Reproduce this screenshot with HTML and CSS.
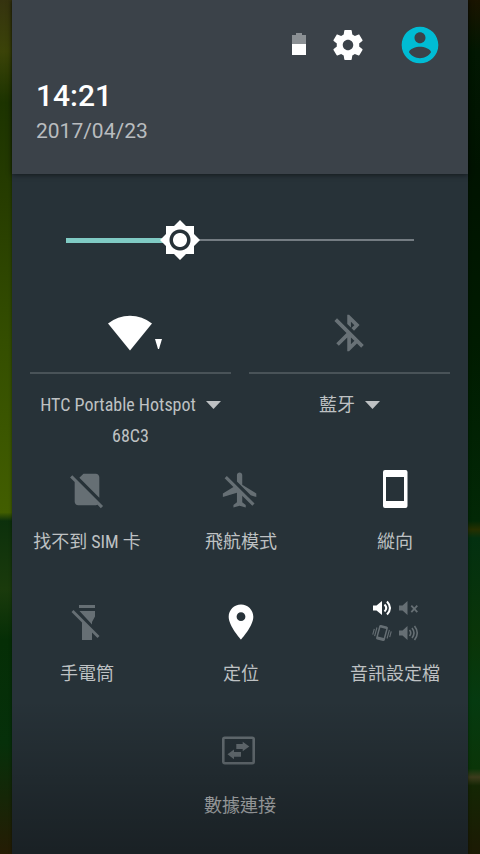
FILE: index.html
```html
<!DOCTYPE html>
<html lang="zh-Hant">
<head>
<meta charset="utf-8">
<meta name="viewport" content="width=device-width, initial-scale=1">
<title>14:21</title>
<link rel="stylesheet" href="styles.css">
</head>
<body>
<main class="panel">
  <header class="header">
    <div class="status">
      <svg class="battery" viewBox="0 0 14 24" aria-hidden="true"><path fill="#8b9094" d="M4 0h6v2h4v9H0V2h4z"/><path fill="#fff" d="M0 11h14v11H0z"/></svg>
      <button class="icon-button settings" aria-label="設定"><svg viewBox="0 0 24 24"><path d="M19.43 12.98c.04-.32.07-.64.07-.98s-.03-.66-.07-.98l2.11-1.65c.19-.15.24-.42.12-.64l-2-3.46c-.12-.22-.39-.3-.61-.22l-2.49 1c-.52-.4-1.08-.73-1.69-.98l-.38-2.65C14.46 2.18 14.25 2 14 2h-4c-.25 0-.46.18-.49.42l-.38 2.65c-.61.25-1.17.59-1.69.98l-2.49-1c-.23-.09-.49 0-.61.22l-2 3.46c-.13.22-.07.49.12.64l2.11 1.65c-.04.32-.07.65-.07.98s.03.66.07.98l-2.11 1.65c-.19.15-.24.42-.12.64l2 3.46c.12.22.39.3.61.22l2.49-1c.52.4 1.08.73 1.69.98l.38 2.65c.03.24.24.42.49.42h4c.25 0 .46-.18.49-.42l.38-2.65c.61-.25 1.17-.59 1.69-.98l2.49 1c.23.09.49 0 .61-.22l2-3.46c.12-.22.07-.49-.12-.64l-2.11-1.65zM12 15.5c-1.93 0-3.5-1.57-3.5-3.5s1.57-3.5 3.5-3.5 3.5 1.57 3.5 3.5-1.57 3.5-3.5 3.5z"/></svg></button>
      <button class="icon-button user" aria-label="使用者"><svg viewBox="0 0 24 24"><path d="M12 2C6.48 2 2 6.48 2 12s4.48 10 10 10 10-4.48 10-10S17.52 2 12 2zm0 3c1.66 0 3 1.34 3 3s-1.34 3-3 3-3-1.34-3-3 1.34-3 3-3zm0 14.2c-2.5 0-4.71-1.28-6-3.22.03-1.99 4-3.08 6-3.08 1.99 0 5.97 1.09 6 3.08-1.29 1.94-3.5 3.22-6 3.22z"/></svg></button>
    </div>
    <time class="clock">14:21</time>
    <time class="date">2017/04/23</time>
  </header>

  <input class="brightness" type="range" min="0" max="348" value="114" aria-label="亮度">

  <section class="wide-tiles">
    <div class="wide-tile">
      <button class="wide-icon on" aria-label="Wi-Fi"><svg viewBox="0 0 65 44"><path d="M32 39.500 10 12.500A35 35 0 0 1 54 12.500z"/><path d="M57 28h7l-3 10h-1z"/></svg></button>
      <button class="wide-label">HTC Portable Hotspot<svg class="caret" viewBox="0 0 15 8"><path d="M0 0h15L7.500 8z"/></svg><br>68C3</button>
    </div>
    <div class="wide-tile">
      <button class="wide-icon" aria-label="藍牙開關"><svg viewBox="-5.500 0 35.450 24"><path d="M13 5.830l1.880 1.880-1.600 1.600 1.410 1.410 3.020-3.020L12 2h-1v5.030l2 2v-3.200zM5.410 4L4 5.410 10.590 12 5 17.590 6.410 19 11 14.410V22h1l4.290-4.290 2.300 2.290L20 18.590 5.410 4zM13 18.170v-3.760l1.880 1.880L13 18.170z"/></svg></button>
      <button class="wide-label">藍牙<svg class="caret" viewBox="0 0 15 8"><path d="M0 0h15L7.500 8z"/></svg></button>
    </div>
  </section>

  <section class="tiles">
    <button class="tile">
      <svg viewBox="-.5 -.2 25 25"><path d="M18.990 5c0-1.100-.890-2-1.990-2h-7L7.660 5.340 19 16.680 18.990 5zM3.650 3.880L2.380 5.150 5 7.770V19c0 1.100.900 2 2 2h10.010c.350 0 .670-.100.960-.260l1.880 1.880 1.270-1.270L3.650 3.880z"/></svg>
      <span>找不到 SIM 卡</span>
    </button>
    <button class="tile">
      <svg viewBox="-.2 -.5 25 25"><path d="M13 9V3.500c0-.830-.670-1.500-1.500-1.500S10 2.670 10 3.500v3.680l7.830 7.830L21 16v-2l-8-5zM3 5.270l4.990 4.990L2 14v2l8-2.500V19l-2 1.500V22l3.500-1 3.500 1v-1.500L13 19v-3.730L18.730 21 20 19.730 4.270 4 3 5.270z"/></svg>
      <span>飛航模式</span>
    </button>
    <button class="tile on">
      <svg viewBox="0 0 44 44"><path fill-rule="evenodd" d="M12 2h20.500a2 2 0 0 1 2 2v34a2 2 0 0 1-2 2H12a2 2 0 0 1-2-2V4a2 2 0 0 1 2-2zM13 9v24h18V9z"/></svg>
      <span>縱向</span>
    </button>
    <button class="tile">
      <svg viewBox="0 0 44 44"><path d="M14 5h16v3H14zM14.500 11H30v5.500L27 22v2.500zM17 20l10 10v10H17zM6.500 12l2-2L34.500 36l-2 2z"/></svg>
      <span>手電筒</span>
    </button>
    <button class="tile on">
      <svg viewBox="-.5 -.5 25 25"><path d="M12 2C8.130 2 5 5.130 5 9c0 5.250 7 13 7 13s7-7.750 7-13c0-3.870-3.130-7-7-7zm0 9.500c-1.380 0-2.500-1.120-2.500-2.500s1.120-2.500 2.500-2.500 2.500 1.120 2.500 2.500-1.120 2.500-2.500 2.500z"/></svg>
      <span>定位</span>
    </button>
    <button class="tile">
      <svg class="profiles" viewBox="0 0 48 44">
        <g class="active"><path d="M2 5.500h3.500L11 1v14l-5.500-4.500H2z"/><path class="line" stroke-width="2" d="M13.500 4.500q3.500 3.500 0 7M16 1.500q6 6.500 0 13"/></g>
        <path d="M28 5.500h3.500L36.500 1v14l-5-4.500H28z"/><path class="line" stroke-width="1.800" d="M40.300 5.700l6 6.500M46.300 5.700l-6 6.500"/>
        <g transform="rotate(15 11 33)"><path fill-rule="evenodd" d="M8 25.500h6a1.500 1.500 0 0 1 1.500 1.500v12a1.500 1.500 0 0 1-1.500 1.500H8A1.500 1.500 0 0 1 6.500 39V27A1.500 1.500 0 0 1 8 25.500zM8 28v9.500h6V28z"/><path class="line" stroke-width="1.100" d="M4.700 29v9M2.500 31v6M17.300 28v9M19.500 29v6"/></g>
        <path d="M28 30.500h3.500l5-4.500v14l-5-4.500H28z"/><path class="line" stroke-width="1.600" d="M38.500 30q2.500 3 0 6M41 28q4 5 0 10M43.500 26q5.500 7 0 14"/>
      </svg>
      <span>音訊設定檔</span>
    </button>
    <button class="tile tile-last">
      <svg viewBox="0 0 44 44"><rect class="line" x="5.300" y="5.800" width="30.400" height="25.400" rx="1.500" stroke-width="2.600"/><path d="M18.300 12h6.400V9.700l6.600 4.800-6.600 4.800V17h-6.400zM23 20h-7v-2.500l-6.500 4.800 6.500 4.900v-2.500h7z"/></svg>
      <span>數據連接</span>
    </button>
  </section>
</main>
</body>
</html>
```

FILE: styles.css
```css
* { box-sizing: border-box; }

body {
  margin: 0;
  min-height: 100vh;
  padding: 0 12px;
  font-family: "Roboto", "Noto Sans CJK TC", sans-serif;
  background:
    linear-gradient(#35330f, #3b4308 6%, #1c3300 12%, #273d00 24%, #344e00 40%, #425e00 60%, #0c300c 61%, #1a3a0c 69%, #052e06 75%, #06300a 87%, #251c04) left / 12px 100% no-repeat,
    linear-gradient(#1a1400, #021702 6%, #001300 20%, #001b00 40%, #022806 61%, #263000 62%, #033010 63%, #0a3508 75%, #053a10 82%, #0a3508 90%, #3c3c1c 91%, #142604 92%, #1c1a04) right / 12px 100% no-repeat,
    #000;
}

button {
  padding: 0;
  border: 0;
  background: none;
  font: inherit;
  color: inherit;
}

svg {
  display: block;
  fill: currentColor;
}

.line {
  fill: none;
  stroke: currentColor;
}

.panel {
  position: relative;
  min-height: 100vh;
  background: #273238;
  color: #bec1c3;
  box-shadow: 0 0 3px rgba(0, 0, 0, .5);
}

/* Scrim that darkens the foot of the panel */
.panel::after {
  content: "";
  position: absolute;
  inset: auto 0 0;
  height: 154px;
  background: linear-gradient(transparent, rgba(0, 0, 0, .35));
  pointer-events: none;
}

.header {
  display: flex;
  flex-direction: column;
  padding: 23px 24px 30px;
  background: #3b4249;
  box-shadow: 0 1px 5px rgba(0, 0, 0, .5);
}

.status {
  display: flex;
  align-items: center;
  justify-content: flex-end;
  height: 44px;
  margin-bottom: 11px;
}

.battery {
  width: 14px;
  height: 24px;
}

.icon-button svg {
  width: 100%;
}

.settings {
  width: 36px;
  margin-left: 24px;
  color: #fff;
}

.user {
  width: 44px;
  margin-left: 32px;
  margin-right: 2px;
  color: #00bcd4;
}

.clock {
  font-size: 30px;
  font-weight: 500;
  line-height: 36px;
  color: #fff;
}

.date {
  margin-top: 4px;
  font-size: 21px;
  line-height: 26px;
  color: #b9bcbf;
}

.brightness {
  appearance: none;
  display: block;
  width: calc(100% - 68px);
  height: 40px;
  margin: 46px 34px 34px;
  background:
    linear-gradient(#80cbc4, #80cbc4) 20px center / calc((100% - 40px) * .33) 5px no-repeat,
    linear-gradient(#747c82, #747c82) center / calc(100% - 40px) 2px no-repeat;
}

.brightness::-webkit-slider-thumb {
  appearance: none;
  width: 40px;
  height: 40px;
  background: radial-gradient(circle, #fff 6.500px, #273238 7.500px, #273238 10px, #fff 11px);
  clip-path: polygon(50% 0, 65% 15%, 85% 15%, 85% 35%, 100% 50%, 85% 65%, 85% 85%, 65% 85%, 50% 100%, 35% 85%, 15% 85%, 15% 65%, 0 50%, 15% 35%, 15% 15%, 35% 15%);
}

.wide-tiles {
  display: grid;
  grid-template-columns: 1fr 1fr;
  gap: 18px;
  padding: 0 18px;
}

.wide-icon {
  display: grid;
  place-items: center;
  width: 100%;
  height: 80px;
  border-bottom: 2px solid #495358;
  color: #687176;
}

.wide-icon svg {
  width: 65px;
  height: 44px;
}

.wide-label {
  display: block;
  width: 100%;
  padding-top: 15px;
  font-family: "Roboto Condensed", "Roboto", "Noto Sans CJK TC", sans-serif;
  font-size: 18px;
  line-height: 31px;
  text-align: center;
}

.caret {
  display: inline-block;
  width: 15px;
  height: 8px;
  margin-left: 10px;
  vertical-align: 2px;
}

.tiles {
  display: grid;
  grid-template-columns: repeat(3, 1fr);
  margin: 0 -4px 0 -2px;
}

.tile {
  display: flex;
  flex-direction: column;
  align-items: center;
  gap: 18px;
  padding: 17px 0 29px;
  font-family: "Roboto Condensed", "Roboto", "Noto Sans CJK TC", sans-serif;
  font-size: 18px;
  line-height: 24px;
}

.tile svg {
  width: 44px;
  height: 44px;
  color: #666f74;
}

.tile .profiles {
  width: 48px;
}

.tile-last {
  grid-column: 1 / -1;
  padding-right: 2px;
}

.wide-icon.on,
.tile.on svg,
.active {
  color: #fff;
}
```
